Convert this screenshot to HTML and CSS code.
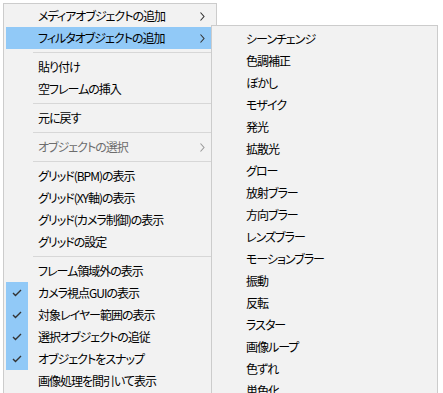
FILE: index.html
```html
<!DOCTYPE html>
<html lang="ja">
<head>
<meta charset="utf-8">
<link rel="stylesheet" href="styles.css">
</head>
<body>
<div class="stage">
  <div class="menu main">
    <div class="item"><span class="check"></span><span class="label">メディアオブジェクトの追加</span><svg class="arrow" width="5" height="9" viewBox="0 0 5 9"><polyline points="0.5,0.5 4,4.5 0.5,8.5"/></svg></div>
    <div class="item active"><span class="check"></span><span class="label">フィルタオブジェクトの追加</span><svg class="arrow" width="5" height="9" viewBox="0 0 5 9"><polyline points="0.5,0.5 4,4.5 0.5,8.5"/></svg></div>
    <div class="sep"></div>
    <div class="item"><span class="check"></span><span class="label">貼り付け</span></div>
    <div class="item"><span class="check"></span><span class="label">空フレームの挿入</span></div>
    <div class="sep"></div>
    <div class="item"><span class="check"></span><span class="label">元に戻す</span></div>
    <div class="sep"></div>
    <div class="item disabled"><span class="check"></span><span class="label">オブジェクトの選択</span><svg class="arrow" width="5" height="9" viewBox="0 0 5 9"><polyline points="0.5,0.5 4,4.5 0.5,8.5"/></svg></div>
    <div class="sep"></div>
    <div class="item"><span class="check"></span><span class="label">グリッド(BPM)の表示</span></div>
    <div class="item"><span class="check"></span><span class="label">グリッド(XY軸)の表示</span></div>
    <div class="item"><span class="check"></span><span class="label">グリッド(カメラ制御)の表示</span></div>
    <div class="item"><span class="check"></span><span class="label">グリッドの設定</span></div>
    <div class="sep"></div>
    <div class="item"><span class="check"></span><span class="label">フレーム領域外の表示</span></div>
    <div class="item"><span class="check on"><svg width="10" height="8" viewBox="0 0 10 8"><polyline points="1,4 3.5,6.5 9,1"/></svg></span><span class="label">カメラ視点GUIの表示</span></div>
    <div class="item"><span class="check on"><svg width="10" height="8" viewBox="0 0 10 8"><polyline points="1,4 3.5,6.5 9,1"/></svg></span><span class="label">対象レイヤー範囲の表示</span></div>
    <div class="item"><span class="check on"><svg width="10" height="8" viewBox="0 0 10 8"><polyline points="1,4 3.5,6.5 9,1"/></svg></span><span class="label">選択オブジェクトの追従</span></div>
    <div class="item"><span class="check on"><svg width="10" height="8" viewBox="0 0 10 8"><polyline points="1,4 3.5,6.5 9,1"/></svg></span><span class="label">オブジェクトをスナップ</span></div>
    <div class="item"><span class="check"></span><span class="label">画像処理を間引いて表示</span></div>
    <div class="item"><span class="check"></span><span class="label">&nbsp;</span></div>
  </div>
  <div class="menu sub">
    <div class="item"><span class="check"></span><span class="label">シーンチェンジ</span></div>
    <div class="item"><span class="check"></span><span class="label">色調補正</span></div>
    <div class="item"><span class="check"></span><span class="label">ぼかし</span></div>
    <div class="item"><span class="check"></span><span class="label">モザイク</span></div>
    <div class="item"><span class="check"></span><span class="label">発光</span></div>
    <div class="item"><span class="check"></span><span class="label">拡散光</span></div>
    <div class="item"><span class="check"></span><span class="label">グロー</span></div>
    <div class="item"><span class="check"></span><span class="label">放射ブラー</span></div>
    <div class="item"><span class="check"></span><span class="label">方向ブラー</span></div>
    <div class="item"><span class="check"></span><span class="label">レンズブラー</span></div>
    <div class="item"><span class="check"></span><span class="label">モーションブラー</span></div>
    <div class="item"><span class="check"></span><span class="label">振動</span></div>
    <div class="item"><span class="check"></span><span class="label">反転</span></div>
    <div class="item"><span class="check"></span><span class="label">ラスター</span></div>
    <div class="item"><span class="check"></span><span class="label">画像ループ</span></div>
    <div class="item"><span class="check"></span><span class="label">色ずれ</span></div>
    <div class="item"><span class="check"></span><span class="label">単色化</span></div>
  </div>
</div>
</body>
</html>
```
FILE: styles.css
```css
html, body {
  margin: 0;
  padding: 0;
  background: #ffffff;
  width: 443px;
  height: 393px;
  overflow: hidden;
}
body {
  font-family: "Noto Sans CJK JP", "Noto Sans", sans-serif;
  font-size: 12px;
  color: #000;
  font-feature-settings: "palt";
}
.stage {
  position: relative;
  width: 443px;
  height: 393px;
  overflow: hidden;
}
.menu {
  background: #f2f2f2;
  border: 1px solid #cccccc;
  box-sizing: border-box;
  display: flex;
  flex-direction: column;
}
.main {
  margin: 3px 0 0 3px;
  width: 214px;
  padding: 1px 2px 0 2px;
}
.sub {
  position: absolute;
  left: 211px;
  top: 25px;
  width: 227px;
  padding: 2px 2px 0 2px;
}
.item {
  height: 22px;
  display: flex;
  align-items: center;
  flex-shrink: 0;
}
.item.active {
  background: #91c9f7;
}
.check {
  width: 22px;
  height: 22px;
  flex-shrink: 0;
  margin-right: 10px;
  display: flex;
  align-items: center;
  justify-content: center;
}
.check.on {
  background: #91c9f7;
}
.check svg polyline {
  fill: none;
  stroke: #333;
  stroke-width: 1.4;
}
.label {
  flex: 1;
  white-space: nowrap;
  line-height: 22px;
  letter-spacing: -1px;
}
.arrow {
  margin-right: 9px;
  flex-shrink: 0;
}
.arrow polyline {
  fill: none;
  stroke: #333;
  stroke-width: 1.1;
}
.disabled .label {
  color: #6d6d6d;
}
.disabled .arrow polyline {
  stroke: #9a9a9a;
}
.sep {
  height: 7px;
  flex-shrink: 0;
  display: flex;
  align-items: center;
  padding-left: 27px;
}
.sep::after {
  content: "";
  display: block;
  height: 1px;
  flex: 1;
  background: #d7d7d7;
}
```
